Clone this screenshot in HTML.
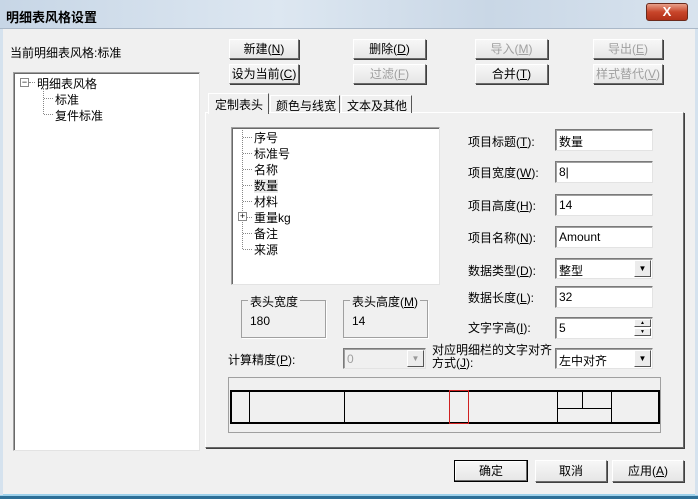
<!DOCTYPE html><html><head><meta charset="utf-8"><style>
*{box-sizing:border-box;margin:0;padding:0}
body{width:698px;height:499px;overflow:hidden;background:#f0f0f0;font-family:"Liberation Sans","Noto Sans CJK SC",sans-serif;font-size:12px;color:#000;position:relative}
.a{position:absolute}
.title{left:0;top:0;width:698px;height:29px;background:linear-gradient(90deg,#c7d6e6,#dde7f1 40%,#c9d7e6 70%,#d8e3ee);border-bottom:1px solid #aab8c8}
.title span{position:absolute;left:6px;top:7px;font-weight:bold;font-size:13px}
.close{left:646px;top:3px;width:42px;height:18px;border-radius:3px;background:linear-gradient(#e8a08a,#c8452a 50%,#b03018);border:1px solid #6b2a1c;color:#fff;font-weight:bold;text-align:center;line-height:16px;font-size:13px}
.btn{position:absolute;height:20px;background:linear-gradient(#f7f7f7,#e6e6e6);border:1px solid #fff;border-right-color:#6a6a6a;border-bottom-color:#6a6a6a;box-shadow:1px 1px 0 #404040;text-align:center;line-height:18px}
.dis{color:#a0a0a0}
.sunk{position:absolute;background:#fff;border:1px solid #a0a0a0;border-right-color:#e3e3e3;border-bottom-color:#e3e3e3;box-shadow:inset 1px 1px 0 #696969}
.inp{position:absolute;background:#fff;border:1px solid #7a7a7a;border-right-color:#e3e3e3;border-bottom-color:#e3e3e3;box-shadow:inset 1px 1px 0 #a0a0a0;padding:3px 0 0 3px;height:22px;width:98px}
.lbl{position:absolute}
.dd{position:absolute;right:1px;top:1px;width:17px;height:17px;background:#ececec;border:1px solid #fff;border-right-color:#555;border-bottom-color:#555;font-size:8px;text-align:center;line-height:15px}
.grp{position:absolute;border:1px solid #a0a0a0;box-shadow:1px 1px 0 #fff}
.grp b{position:absolute;top:-8px;left:6px;background:#f0f0f0;font-weight:normal;padding:0 2px}
.vl{position:absolute;width:0;border-left:1px dotted #888}
.hl{position:absolute;height:0;border-top:1px dotted #888}
.pm{position:absolute;width:9px;height:9px;border:1px solid #888;background:#fff;font-size:9px;line-height:7px;text-align:center;color:#000}
</style></head><body>
<div class="a title"><span>明细表风格设置</span></div>
<div class="a close">X</div>
<div class="a" style="left:0;top:494px;width:698px;height:5px;background:#2d6f97;border-top:2px solid #9cd0ea"></div>
<div class="a" style="left:0;top:29px;width:3px;height:466px;background:#d5e2ee"></div>
<div class="a" style="right:0;top:29px;width:3px;height:466px;background:#d5e2ee"></div>

<div class="lbl" style="left:10px;top:44px">当前明细表风格:标准</div>
<div class="sunk" style="left:13px;top:72px;width:187px;height:379px"></div>
<div class="pm" style="left:20px;top:78px">−</div>
<div class="hl" style="left:29px;top:82px;width:6px"></div>
<div class="lbl" style="left:37px;top:75px">明细表风格</div>
<div class="vl" style="left:43px;top:88px;height:26px"></div>
<div class="hl" style="left:44px;top:98px;width:9px"></div>
<div class="hl" style="left:44px;top:114px;width:9px"></div>
<div class="lbl" style="left:55px;top:91px">标准</div>
<div class="lbl" style="left:55px;top:107px">复件标准</div>

<div class="btn" style="left:229px;top:39px;width:70px">新建(<u>N</u>)</div>
<div class="btn" style="left:353px;top:39px;width:73px">删除(<u>D</u>)</div>
<div class="btn dis" style="left:475px;top:39px;width:73px">导入(<u>M</u>)</div>
<div class="btn dis" style="left:593px;top:39px;width:70px">导出(<u>E</u>)</div>
<div class="btn" style="left:229px;top:64px;width:70px">设为当前(<u>C</u>)</div>
<div class="btn dis" style="left:353px;top:64px;width:73px">过滤(<u>F</u>)</div>
<div class="btn" style="left:475px;top:64px;width:73px">合并(<u>T</u>)</div>
<div class="btn dis" style="left:593px;top:64px;width:70px">样式替代(<u>V</u>)</div>

<div class="a" style="left:205px;top:112px;width:479px;height:336px;border:1px solid #fff;border-right-color:#696969;border-bottom-color:#696969;box-shadow:1px 1px 0 #404040"></div>
<div class="a" style="left:208px;top:93px;width:61px;height:21px;background:#f0f0f0;border:1px solid #fff;border-bottom:none;border-right:1px solid #555;padding:2px 0 0 6px">定制表头</div>
<div class="a" style="left:270px;top:95px;width:70px;height:18px;border:1px solid #fff;border-bottom:none;border-right:1px solid #555;padding:1px 0 0 5px">颜色与线宽</div>
<div class="a" style="left:341px;top:95px;width:71px;height:18px;border:1px solid #fff;border-bottom:none;border-right:1px solid #555;padding:1px 0 0 5px">文本及其他</div>

<div class="sunk" style="left:231px;top:127px;width:209px;height:158px"></div>
<div class="vl" style="left:242px;top:130px;height:119px"></div>
<div class="hl" style="left:243px;top:137px;width:9px"></div>
<div class="hl" style="left:243px;top:153px;width:9px"></div>
<div class="hl" style="left:243px;top:169px;width:9px"></div>
<div class="hl" style="left:243px;top:185px;width:9px"></div>
<div class="hl" style="left:243px;top:201px;width:9px"></div>
<div class="hl" style="left:243px;top:217px;width:9px"></div>
<div class="hl" style="left:243px;top:233px;width:9px"></div>
<div class="hl" style="left:243px;top:249px;width:9px"></div>
<div class="pm" style="left:238px;top:212px">+</div>
<div class="lbl" style="left:254px;top:130px;line-height:16px">序号<br>标准号<br>名称<br><span style="background:#ececec">数量</span><br>材料<br>重量kg<br>备注<br>来源</div>

<div class="lbl" style="left:468px;top:133px">项目标题(<u>T</u>):</div>
<div class="lbl" style="left:468px;top:164px">项目宽度(<u>W</u>):</div>
<div class="lbl" style="left:468px;top:197px">项目高度(<u>H</u>):</div>
<div class="lbl" style="left:468px;top:229px">项目名称(<u>N</u>):</div>
<div class="lbl" style="left:468px;top:262px">数据类型(<u>D</u>):</div>
<div class="lbl" style="left:468px;top:289px">数据长度(<u>L</u>):</div>
<div class="lbl" style="left:468px;top:319px">文字字高(<u>I</u>):</div>
<div class="inp" style="left:555px;top:129px">数量</div>
<div class="inp" style="left:555px;top:161px">8|</div>
<div class="inp" style="left:555px;top:194px">14</div>
<div class="inp" style="left:555px;top:226px">Amount</div>
<div class="inp" style="left:555px;top:258px;height:21px">整型<div class="dd">▼</div></div>
<div class="inp" style="left:555px;top:286px">32</div>
<div class="inp" style="left:555px;top:317px">5<div class="dd" style="height:8px;line-height:6px;font-size:5px">▲</div><div class="dd" style="top:10px;height:8px;line-height:6px;font-size:5px">▼</div></div>
<div class="inp" style="left:555px;top:348px;height:21px">左中对齐<div class="dd">▼</div></div>

<div class="grp" style="left:241px;top:300px;width:85px;height:38px"><b>表头宽度</b><span class="a" style="left:8px;top:13px">180</span></div>
<div class="grp" style="left:343px;top:300px;width:85px;height:38px"><b>表头高度(<u>M</u>)</b><span class="a" style="left:8px;top:13px">14</span></div>

<div class="lbl" style="left:228px;top:351px">计算精度(<u>P</u>):</div>
<div class="inp dis" style="left:343px;top:348px;width:83px;height:21px;background:#f0f0f0">0<div class="dd" style="color:#999">▼</div></div>
<div class="lbl" style="left:432px;top:344px;line-height:13px">对应明细栏的文字对齐<br>方式(<u>J</u>):</div>

<div class="a" style="left:228px;top:377px;width:433px;height:56px;border:1px solid #a0a0a0"></div>
<div class="a" style="left:230px;top:390px;width:430px;height:34px;border:2px solid #000"></div>
<div class="a" style="left:249px;top:391px;width:1px;height:32px;background:#000"></div>
<div class="a" style="left:344px;top:391px;width:1px;height:32px;background:#000"></div>
<div class="a" style="left:557px;top:391px;width:1px;height:32px;background:#000"></div>
<div class="a" style="left:611px;top:391px;width:1px;height:32px;background:#000"></div>
<div class="a" style="left:582px;top:391px;width:1px;height:17px;background:#000"></div>
<div class="a" style="left:557px;top:408px;width:54px;height:1px;background:#000"></div>
<div class="a" style="left:449px;top:390px;width:20px;height:34px;border:1px solid #d02020"></div>

<div class="btn" style="left:454px;top:460px;width:74px;height:22px;line-height:20px;border:1px solid #000;box-shadow:inset -1px -1px 0 #6a6a6a,inset 1px 1px 0 #fff">确定</div>
<div class="btn" style="left:535px;top:460px;width:72px;height:22px;line-height:20px">取消</div>
<div class="btn" style="left:612px;top:460px;width:72px;height:22px;line-height:20px">应用(<u>A</u>)</div>
</body></html>
